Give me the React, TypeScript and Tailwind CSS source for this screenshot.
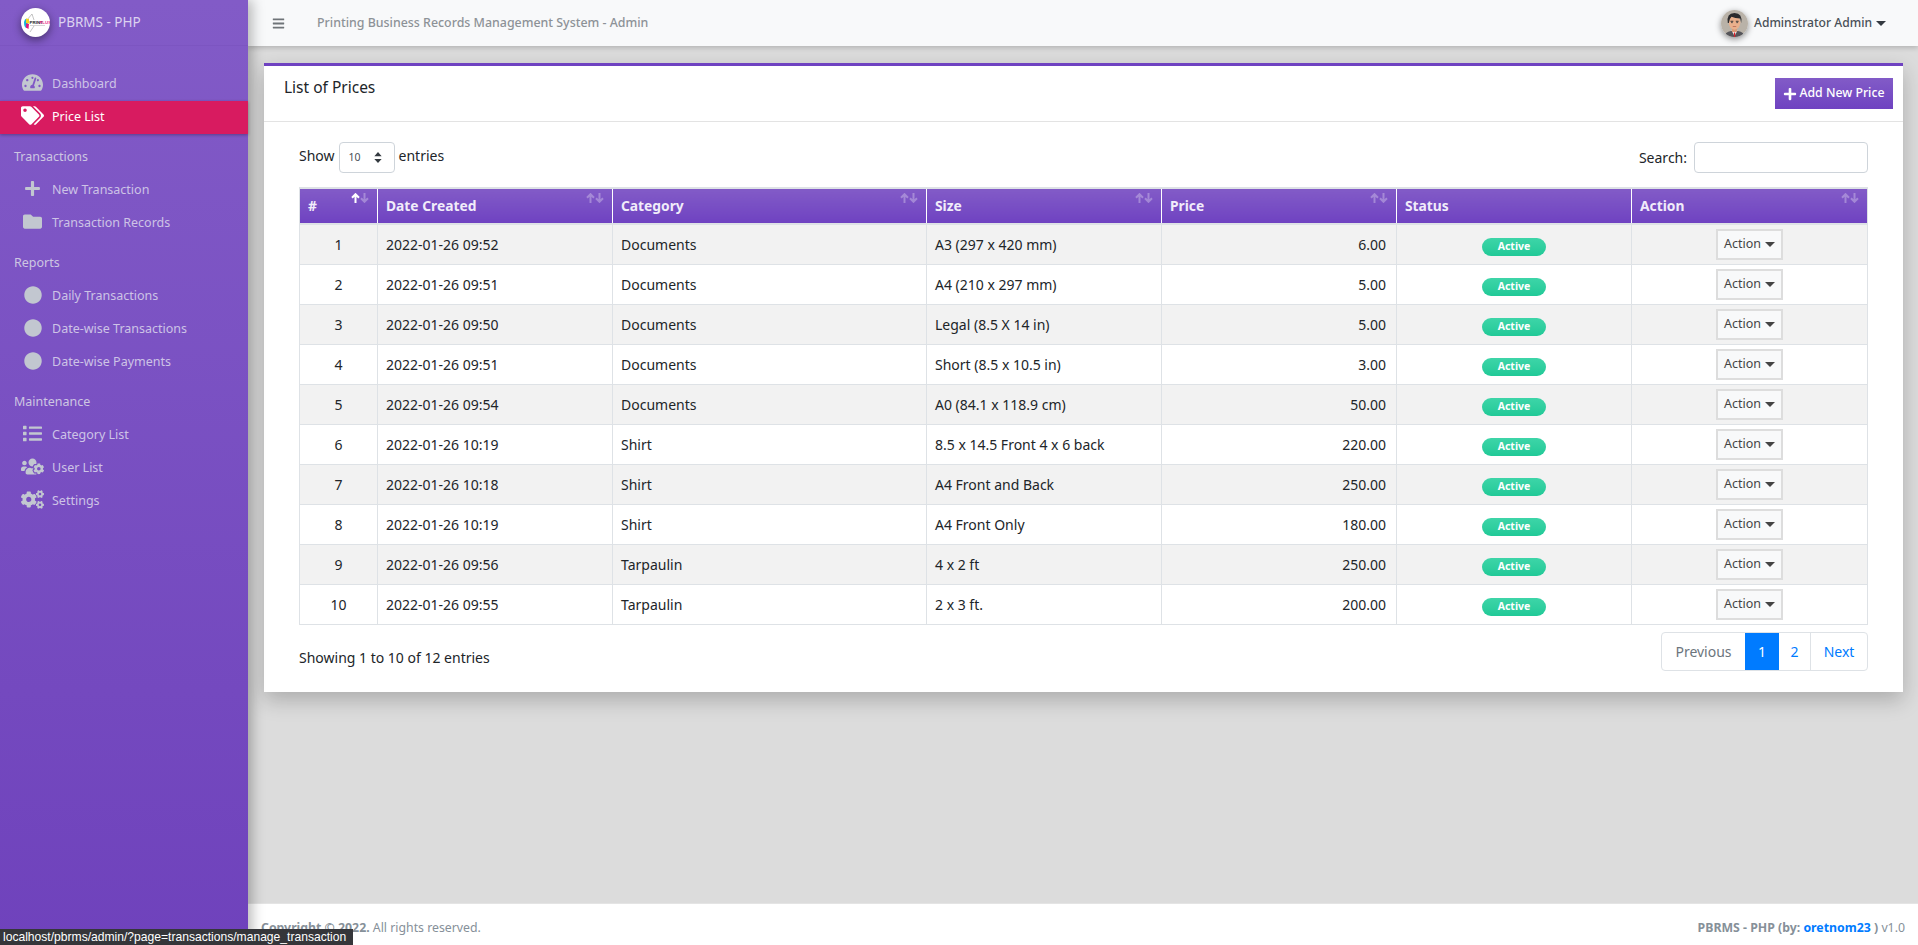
import { FaBars, FaCircle, FaCogs, FaFolder, FaList, FaPlus, FaTachometerAlt, FaTags, FaUsersCog } from "react-icons/fa";
import type { IconType } from "react-icons";

const rows = [
  ["1", "2022-01-26 09:52", "Documents", "A3 (297 x 420 mm)", "6.00"],
  ["2", "2022-01-26 09:51", "Documents", "A4 (210 x 297 mm)", "5.00"],
  ["3", "2022-01-26 09:50", "Documents", "Legal (8.5 X 14 in)", "5.00"],
  ["4", "2022-01-26 09:51", "Documents", "Short (8.5 x 10.5 in)", "3.00"],
  ["5", "2022-01-26 09:54", "Documents", "A0 (84.1 x 118.9 cm)", "50.00"],
  ["6", "2022-01-26 10:19", "Shirt", "8.5 x 14.5 Front 4 x 6 back", "220.00"],
  ["7", "2022-01-26 10:18", "Shirt", "A4 Front and Back", "250.00"],
  ["8", "2022-01-26 10:19", "Shirt", "A4 Front Only", "180.00"],
  ["9", "2022-01-26 09:56", "Tarpaulin", "4 x 2 ft", "250.00"],
  ["10", "2022-01-26 09:55", "Tarpaulin", "2 x 3 ft.", "200.00"],
];

const columns = [
  { label: "#", width: "w-[78px]" },
  { label: "Date Created", width: "w-[235px]" },
  { label: "Category", width: "w-[314px]" },
  { label: "Size", width: "w-[235px]" },
  { label: "Price", width: "w-[235px]" },
  { label: "Status", width: "w-[235px]" },
  { label: "Action", width: "w-[236px]" },
];

function NavItem({ icon: Icon, label, size = 20, active = false }: { icon: IconType; label: string; size?: number; active?: boolean }) {
  return (
    <div className={`flex h-[33px] items-center ${active ? "bg-[#d81b60] text-white shadow-[0_1px_3px_rgba(0,0,0,0.3)]" : "text-[#c2c7d0]"}`}>
      <span className="mb-[4px] flex w-[65px] shrink-0 justify-center">
        <Icon size={size} />
      </span>
      <span className={`-ml-[13px] text-[12.5px] ${active ? "" : "text-[#cdc3e6]"}`}>{label}</span>
    </div>
  );
}

function NavHeader({ label, gap }: { label: string; gap: string }) {
  return <div className={`flex h-[33px] items-center pl-[14px] text-[12.5px] text-[#cdc6e2] ${gap}`}>{label}</div>;
}

function SortArrows({ on = false }: { on?: boolean }) {
  return (
    <span className="absolute right-[8px] top-[4px] flex">
      <svg viewBox="0 0 9 10" className={`h-[10px] w-[9px] fill-none stroke-[2] ${on ? "stroke-white" : "stroke-white/30"}`}>
        <path d="M4.5 10 V1.5 M1 4.8 L4.5 1.2 L8 4.8" />
      </svg>
      <svg viewBox="0 0 9 10" className="h-[10px] w-[9px] fill-none stroke-white/30 stroke-[2]">
        <path d="M4.5 0 V8.5 M1 5.2 L4.5 8.8 L8 5.2" />
      </svg>
    </span>
  );
}

function Logo() {
  return (
    <span className="flex h-[29px] w-[29px] items-center justify-center overflow-hidden rounded-full bg-white shadow-[0_3px_8px_rgba(0,0,0,0.45)]">
      <svg viewBox="0 0 29 29" className="h-[29px] w-[29px]">
        <path d="M11 6 L6 12 M11 6 L13 12 M9 24 L13 18" stroke="#888" strokeWidth="0.5" fill="none" />
        <path d="M3 14 Q4 10 6 11 L7 14 L6 20 Q3 20 3 14Z" fill="#18b4d8" />
        <path d="M5 10.5 L8 11 L8 15.5 L5 15Z" fill="#f4d21f" />
        <path d="M5 15.5 L8 16 L7.5 21 L5 19.5Z" fill="#e5177b" />
        <text x="8.6" y="16" fontSize="4.4" fontWeight="700" fill="#222" fontFamily="Liberation Sans, sans-serif">PRINT</text>
        <text x="18.4" y="16" fontSize="4.4" fontWeight="700" fill="#ec2f8b" fontFamily="Liberation Sans, sans-serif">PLUS</text>
        <rect x="9" y="17.4" width="15" height="0.6" fill="#bbb" />
      </svg>
    </span>
  );
}

function Avatar() {
  return (
    <span className="h-[27px] w-[27px] overflow-hidden rounded-full shadow-[0_2px_6px_rgba(0,0,0,0.45)]">
      <svg viewBox="0 0 27 27" className="h-[27px] w-[27px]">
        <rect width="27" height="27" fill="#b9b2a8" />
        <path d="M3 27 Q4 22 10 21 L17 21 Q23 22 24 27Z" fill="#55555a" />
        <path d="M10.5 20.5 L13.5 26 L16.5 20.5Z" fill="#f6f3f0" />
        <rect x="12.9" y="22.5" width="1.3" height="4.5" fill="#d8202a" />
        <rect x="11" y="17" width="5" height="5" fill="#d99b78" />
        <ellipse cx="13.5" cy="12.5" rx="5.8" ry="7.2" fill="#eab08c" />
        <path d="M6.8 13 Q5.2 3 13.5 3 Q21.8 3 20.2 13 L19.3 8.5 Q14 8.5 10.5 6.8 Q8.4 8.6 7.8 13Z" fill="#2b2b2d" />
        <rect x="9.5" y="10.8" width="2.8" height="0.9" fill="#2b2b2d" />
        <rect x="14.8" y="10.8" width="2.8" height="0.9" fill="#2b2b2d" />
        <rect x="10" y="12.2" width="1.8" height="0.9" fill="#444" />
        <rect x="15.3" y="12.2" width="1.8" height="0.9" fill="#444" />
        <rect x="11.8" y="16.4" width="3.4" height="0.6" fill="#a8503f" />
      </svg>
    </span>
  );
}

function Caret({ className }: { className: string }) {
  return <span className={`ml-[4px] inline-block h-0 w-0 border-x-[5px] border-t-[5px] border-x-transparent ${className}`} />;
}

export default function App() {
  return (
    <div className="relative flex h-[945px] w-[1918px] overflow-hidden bg-[#dcdcdc] font-['Noto_Sans',sans-serif] text-[14px] text-[#212529]">
      {/* sidebar */}
      <aside className="z-20 flex w-[248px] shrink-0 flex-col bg-gradient-to-b from-[#825bc7] to-[#6f42bc] shadow-[4px_0_12px_rgba(0,0,0,0.28)]">
        <div className="flex h-[46px] items-center border-b border-[#7c55c1] pl-[21px]">
          <Logo />
          <span className="ml-[8px] text-[13.5px] text-[#dcd2f0]">PBRMS - PHP</span>
        </div>
        <nav className="flex flex-col pt-[22px]">
          <NavItem icon={FaTachometerAlt} label="Dashboard" size={21} />
          <NavItem icon={FaTags} label="Price List" size={23} active />
          <NavHeader label="Transactions" gap="mt-[7px]" />
          <NavItem icon={FaPlus} label="New Transaction" size={17} />
          <NavItem icon={FaFolder} label="Transaction Records" size={19} />
          <NavHeader label="Reports" gap="mt-[7px]" />
          <NavItem icon={FaCircle} label="Daily Transactions" size={18} />
          <NavItem icon={FaCircle} label="Date-wise Transactions" size={18} />
          <NavItem icon={FaCircle} label="Date-wise Payments" size={18} />
          <NavHeader label="Maintenance" gap="mt-[7px]" />
          <NavItem icon={FaList} label="Category List" size={19} />
          <NavItem icon={FaUsersCog} label="User List" size={23} />
          <NavItem icon={FaCogs} label="Settings" size={23} />
        </nav>
      </aside>

      {/* main column */}
      <div className="flex min-w-0 flex-1 flex-col">
        <header className="z-10 flex h-[46px] shrink-0 items-center bg-[#f8f9fa] pl-[24px] pr-[32px] shadow-[0_2px_5px_rgba(0,0,0,0.18)]">
          <FaBars size={13} className="text-[#6f7478]" />
          <span className="ml-[32px] text-[12.4px] font-medium text-[#8d9297]">Printing Business Records Management System - Admin</span>
          <div className="ml-auto flex items-center">
            <Avatar />
            <span className="ml-[6px] text-[12.1px] font-medium text-[#495057]">Adminstrator Admin</span>
            <Caret className="border-t-[#343a40]" />
          </div>
        </header>

        <main className="flex-1 pl-[16px] pr-[15px] pt-[17px]">
          <section className="h-[629px] border-t-[3px] border-[#6f42c1] bg-white shadow-[0_8px_20px_rgba(0,0,0,0.22)]">
            <div className="flex h-[56px] items-start justify-between border-b border-[#e3e3e3] pl-[20px] pr-[10px]">
              <h3 className="mt-[11px] text-[15.5px] leading-[20px] text-[#212529]">List of Prices</h3>
              <button className="mt-[12px] flex h-[31px] w-[118px] items-center justify-center bg-gradient-to-b from-[#825bc7] to-[#6f42c1] text-[12.3px] font-medium text-white">
                <FaPlus size={14} className="mr-[2px]" />
                Add New Price
              </button>
            </div>

            <div className="px-[35px] pt-[20px]">
              <div className="flex h-[31px] items-center justify-between">
                <div className="flex items-center">
                  <span className="mb-[4px]">Show</span>
                  <span className="mx-[4px] flex h-[31px] w-[56px] items-center justify-between rounded-[4px] border border-[#ced4da] pl-[9px] pr-[12px] text-[10.5px] text-[#495057]">
                    10
                    <svg viewBox="0 0 8 12" className="h-[11px] w-[8px] fill-[#343a40]">
                      <path d="M4 0 L8 4.5 H0Z M4 12 L0 7.5 H8Z" />
                    </svg>
                  </span>
                  <span className="mb-[4px]">entries</span>
                </div>
                <div className="flex items-center">
                  <span>Search:</span>
                  <span className="ml-[7px] h-[31px] w-[174px] rounded-[4px] border border-[#ced4da] bg-white" />
                </div>
              </div>

              <table className="mt-[14px] w-[1568px] table-fixed border-collapse">
                <thead>
                  <tr className="h-[36px]">
                    {columns.map((col, i) => (
                      <th
                        key={col.label}
                        className={`relative border-x border-b-2 border-t-2 border-x-white border-y-[#dee2e6] bg-gradient-to-b from-[#825bc7] to-[#6f42c1] pl-[8px] text-left text-[13.8px] font-bold text-[#f1ecfa] first:border-l-[#dee2e6] last:border-r-[#dee2e6] ${col.width}`}
                      >
                        {col.label}
                        {col.label !== "Status" && <SortArrows on={i === 0} />}
                      </th>
                    ))}
                  </tr>
                </thead>
                <tbody>
                  {rows.map((row, i) => (
                    <tr key={row[0]} className={`h-[40px] ${i % 2 === 0 ? "bg-[#f2f2f2]" : "bg-white"}`}>
                      <td className="border border-[#dee2e6] text-center">{row[0]}</td>
                      <td className="border border-[#dee2e6] pl-[8px]">{row[1]}</td>
                      <td className="border border-[#dee2e6] pl-[8px]">{row[2]}</td>
                      <td className="border border-[#dee2e6] pl-[8px]">{row[3]}</td>
                      <td className="border border-[#dee2e6] pr-[10px] text-right">{row[4]}</td>
                      <td className="border border-[#dee2e6]">
                        <div className="flex justify-center pt-[5px]">
                          <span className="flex h-[18px] w-[64px] items-center justify-center rounded-full bg-gradient-to-b from-[#3dd5a8] to-[#20c997] text-[10.5px] font-bold text-white">Active</span>
                        </div>
                      </td>
                      <td className="border border-[#dee2e6]">
                        <div className="flex justify-center">
                          <button className="flex h-[31px] w-[67px] items-center justify-center border-2 border-[#dddddd] bg-[#f8f9fa] text-[12.5px] text-[#444]">
                            Action
                            <Caret className="border-t-[#444]" />
                          </button>
                        </div>
                      </td>
                    </tr>
                  ))}
                </tbody>
              </table>

              <div className="mt-[7px] flex items-start justify-between">
                <span className="mt-[16px] leading-[20px]">Showing 1 to 10 of 12 entries</span>
                <div className="flex h-[39px] overflow-hidden rounded-[4px] border border-[#dee2e6] text-[14px]">
                  <span className="flex w-[83px] items-center justify-center text-[#6c757d]">Previous</span>
                  <span className="flex w-[34px] items-center justify-center bg-[#007bff] text-white">1</span>
                  <span className="flex w-[32px] items-center justify-center border-r border-[#dee2e6] text-[#007bff]">2</span>
                  <span className="flex w-[56px] items-center justify-center text-[#007bff]">Next</span>
                </div>
              </div>
            </div>
          </section>
        </main>

        <footer className="flex h-[42px] shrink-0 items-center justify-between border-t border-[#e4e4e4] bg-white px-[13px] pt-[7px] text-[12.3px] text-[#869099]">
          <span>
            <b className="font-bold">Copyright © 2022.</b> All rights reserved.
          </span>
          <span>
            <b className="font-bold">
              PBRMS - PHP (by: <span className="text-[#007bff]">oretnom23</span> )
            </b>{" "}
            v1.0
          </span>
        </footer>
      </div>

      {/* browser status bubble */}
      <div className="absolute bottom-0 left-0 z-30 flex h-[16px] w-[353px] items-center whitespace-nowrap bg-[#35363a] pl-[3px] font-['Liberation_Sans',sans-serif] text-[12.1px] text-white">
        localhost/pbrms/admin/?page=transactions/manage_transaction
      </div>
    </div>
  );
}
